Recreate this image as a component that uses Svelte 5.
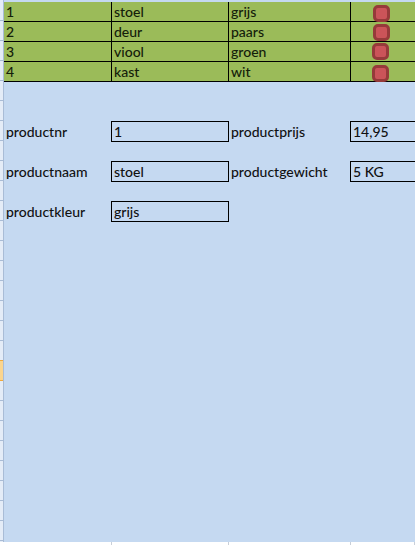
<script>
  const products = [
    { nr: '1', naam: 'stoel', kleur: 'grijs', dx: 22, dy: 3 },
    { nr: '2', naam: 'deur', kleur: 'paars', dx: 22, dy: 2 },
    { nr: '3', naam: 'viool', kleur: 'groen', dx: 21, dy: 1 },
    { nr: '4', naam: 'kast', kleur: 'wit', dx: 21, dy: 3 }
  ];
  const gutter = Array.from({ length: 27 }, (_, i) => i);
</script>

<div class="sheet">
  <div class="gutter">
    {#each gutter as i}
      <div class="tick" class:active={i === 18}></div>
    {/each}
  </div>
  <div class="main">
    <div class="canvas">
      <div class="table">
        {#each products as p}
          <div class="row">
            <div class="cell">{p.nr}</div>
            <div class="cell">{p.naam}</div>
            <div class="cell">{p.kleur}</div>
            <div class="cell action">
              <span class="btn" style:margin-left="{p.dx}px" style:margin-top="{p.dy}px"></span>
            </div>
          </div>
        {/each}
      </div>
      <div class="form">
        <div class="frow">
          <div class="label">productnr</div>
          <div class="box">1</div>
          <div class="label">productprijs</div>
          <div class="box last">14,95</div>
        </div>
        <div class="frow">
          <div class="label">productnaam</div>
          <div class="box">stoel</div>
          <div class="label">productgewicht</div>
          <div class="box last">5 KG</div>
        </div>
        <div class="frow">
          <div class="label">productkleur</div>
          <div class="box">grijs</div>
        </div>
      </div>
    </div>
    <div class="strip">
      <span></span><span></span><span></span><span></span>
    </div>
  </div>
</div>

<style>
  :global(body) {
    margin: 0;
    background: #fff;
  }
  .sheet {
    width: 415px;
    height: 545px;
    display: flex;
    overflow: hidden;
    font-family: Lato, "Open Sans", sans-serif;
    font-size: 14px;
    font-weight: 500;
    color: #111;
  }
  .gutter {
    width: 3px;
    flex: none;
    background: #e4ecf7;
    border-right: 1px solid #a9bcd6;
    padding-top: 1px;
    height: 541px;
    overflow: hidden;
  }
  .tick {
    height: 19px;
    border-bottom: 1px solid #a9bcd6;
  }
  .tick.active {
    background: #fbd58e;
    border-bottom-color: #f0a93c;
    box-shadow: 0 -1px 0 #f0a93c;
  }
  .main {
    flex: 1;
    display: flex;
    flex-direction: column;
  }
  .canvas {
    height: 542px;
    background: #c5d9f1;
    padding-top: 2px;
    box-sizing: border-box;
  }
  .table {
    background: #9bbb59;
  }
  .row {
    display: grid;
    grid-template-columns: 108px 117px 122px 64px;
    height: 20px;
    box-sizing: border-box;
    border-bottom: 1px solid #000;
  }
  .cell {
    padding-left: 2px;
    line-height: 20px;
    border-right: 1px solid #000;
    box-sizing: border-box;
    height: 19px;
    overflow: hidden;
    color: #14200a;
  }
  .cell.action {
    border-right: none;
    display: flex;
    align-items: flex-start;
    padding: 0;
    overflow: visible;
  }
  .btn {
    width: 17px;
    height: 17px;
    flex: none;
    box-sizing: border-box;
    background: #cb5459;
    border: 3px solid #963a3a;
    border-radius: 5px;
  }
  .form {
    margin-top: 39px;
    display: flex;
    flex-direction: column;
    gap: 20px;
  }
  .frow {
    display: grid;
    grid-template-columns: 107px 118px 121px 65px;
    height: 20px;
  }
  .label {
    padding-left: 2px;
    line-height: 22px;
  }
  .box {
    border: 1px solid #000;
    height: 21px;
    box-sizing: border-box;
    padding-left: 2px;
    line-height: 20px;
  }
  .box.last {
    border-right: none;
  }
  .strip {
    display: grid;
    grid-template-columns: 108px 117px 122px 64px;
    height: 3px;
  }
  .strip span {
    border-right: 1px solid #c9cfd8;
  }
</style>
